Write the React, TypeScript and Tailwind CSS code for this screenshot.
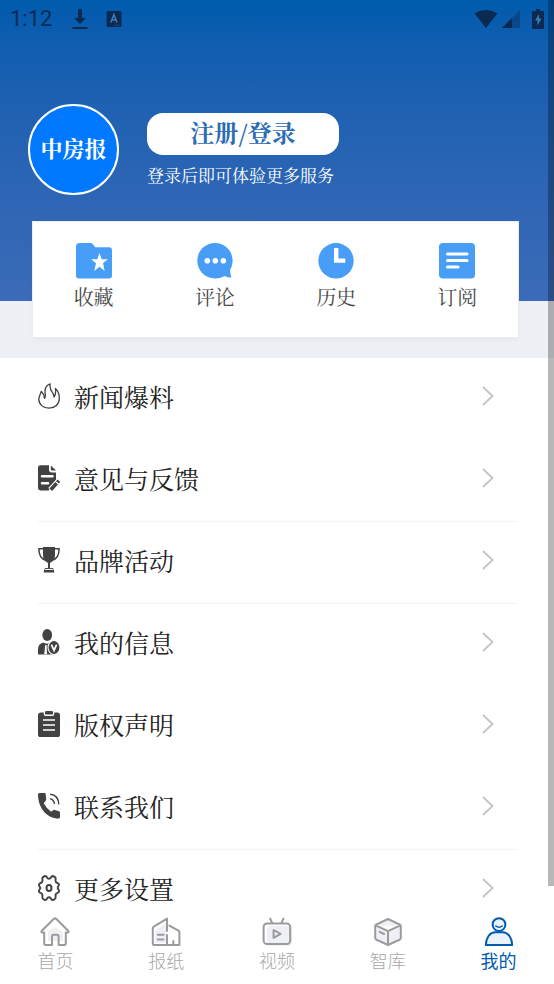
import type { ReactNode } from 'react'

const INK = '#424242'
const BLUE = '#489df7'
const GREY = '#9b9b9b'

const shortcuts: { label: string; icon: ReactNode }[] = [
  {
    label: '收藏',
    icon: (
      <>
        <path d="M3.5 0H14.5Q16 0 17 1.2L19.2 4.2H33Q36 4.2 36 7.2V32.5Q36 35.5 33 35.5H3Q0 35.5 0 32.5V3.5Q0 0 3.5 0Z" fill={BLUE} />
        <path d="M23.5 10L25.7 16.3H31.8L27 20.3L28.7 28L23.5 23.8L18.3 28L20 20.3L15.2 16.3H21.3Z" fill="#fff" />
      </>
    ),
  },
  {
    label: '评论',
    icon: (
      <>
        <path d="M18 0C28 0 35.6 8 35.6 17.5C35.6 21 34.8 24 33 27Q33.2 31 34.5 34.5Q31 34.6 27.5 33Q23.5 35.5 18 35.5C8 35.5 .3 27.5 .3 17.8C.3 8 8 0 18 0Z" fill={BLUE} />
        <circle cx="10.3" cy="17.8" r="2.8" fill="#fff" />
        <circle cx="18.3" cy="17.8" r="2.8" fill="#fff" />
        <circle cx="26.3" cy="17.8" r="2.8" fill="#fff" />
      </>
    ),
  },
  {
    label: '历史',
    icon: (
      <>
        <circle cx="18" cy="17.8" r="17.7" fill={BLUE} />
        <path d="M16 5H20.4V15.4H27.3V19.8H16Z" fill="#fff" />
      </>
    ),
  },
  {
    label: '订阅',
    icon: (
      <>
        <rect width="36" height="35.5" rx="4" fill={BLUE} />
        <path d="M8.5 11H28M8.5 17.5H28M8.5 24H19" stroke="#fff" strokeWidth="3.2" strokeLinecap="round" />
      </>
    ),
  },
]

const menu: { label: string; divider?: boolean; icon: ReactNode }[] = [
  {
    label: '新闻爆料',
    icon: (
      <path
        d="M3.2 8.3C5.2 10.2 6.2 12 6.6 15.3C8 13.8 7.2 11.4 7 9C6.9 5.2 8.8 2 12.2 .9C11.4 5.2 12.6 7.3 14.4 9.4C15.5 10.8 15.9 12.4 16 14C17.6 12.2 18 9.4 17.4 5.4C20.3 8.2 21.4 12 21.3 15.6C21.2 21.4 17 25.2 11 25.2C5 25.2 .8 21.4 .8 16C.8 13 2.6 11.6 3.2 8.3Z"
        fill="none"
        stroke={INK}
        strokeWidth="1.3"
        strokeLinejoin="round"
      />
    ),
  },
  {
    label: '意见与反馈',
    divider: true,
    icon: (
      <>
        <path d="M2.5 .3H11V4.5Q11 7.5 14 7.5H18V15.2L10.6 25.4H2.5Q0 25.4 0 23V3Q0 .3 2.5 .3Z" fill={INK} />
        <path d="M12.8 .5L18 5.6H14Q12.8 5.6 12.8 4.5Z" fill={INK} />
        <path d="M4 11.2H14.5M4 18.2H10" stroke="#fff" strokeWidth="2.5" strokeLinecap="round" />
        <path d="M12.4 25L20.6 16.4" stroke="#fff" strokeWidth="6" />
        <path d="M12.8 24.8L18.6 18.2M19.4 17.4L20.8 15.8" stroke={INK} strokeWidth="3.6" />
      </>
    ),
  },
  {
    label: '品牌活动',
    divider: true,
    icon: (
      <>
        <path d="M5 0H17V8Q17 13.6 12 16V21H15Q16 23 16.4 25.6H5.6Q6 23 7 21H10V16Q5 13.6 5 8Z" fill={INK} />
        <path d="M5 1.8H.9Q.8 11.8 8 13.2M17 1.8H21.1Q21.2 11.8 14 13.2" fill="none" stroke={INK} strokeWidth="1.5" />
        <path d="M7 22.4H15" stroke="#fff" strokeWidth="1" />
      </>
    ),
  },
  {
    label: '我的信息',
    icon: (
      <>
        <ellipse cx="9.2" cy="6" rx="4.9" ry="6" fill={INK} />
        <path d="M0 25V20Q.2 15 5.2 13.6Q9 15.8 13 13.6Q15 14 17 17L14 25.4H0Z" fill={INK} />
        <path d="M7.2 16L6.2 25.3H9L8.6 16Z" fill="#fff" />
        <ellipse cx="16" cy="18.5" rx="6" ry="7" fill={INK} stroke="#fff" strokeWidth="1.1" />
        <path d="M13.4 15.6L16 21.4L18.6 15.6" fill="none" stroke="#fff" strokeWidth="1.7" />
      </>
    ),
  },
  {
    label: '版权声明',
    icon: (
      <>
        <path d="M2.4 1.5H5.8V3.2Q5.8 5 7.6 5H14.4Q16.2 5 16.2 3.2V1.5H19.6Q22 1.5 22 4V23.4Q22 26 19.6 26H2.4Q0 26 0 23.4V4Q0 1.5 2.4 1.5Z" fill={INK} />
        <rect x="7" y="0" width="8" height="3.6" rx="1.2" fill={INK} />
        <path d="M5 9H17M5 14H17M5 19H17" stroke="#fff" strokeWidth="1.6" />
      </>
    ),
  },
  {
    label: '联系我们',
    divider: true,
    icon: (
      <>
        <path d="M1.5 0H6.6Q7.6 0 7.7 1.2L8.2 6.2Q8.2 7.2 7.5 8L5.7 10.2Q8.8 16 13.2 18.8L15 17.2Q15.8 16.6 16.8 16.9L21 18.2Q22 18.6 22 19.8V24Q22 25.5 20.6 25.5C9 25.5 .3 15.2 0 1.7Q0 0 1.5 0Z" fill={INK} />
        <path d="M12.2 1.2Q20.4 2 20.8 11.4M12.2 5.8Q16 6.6 16.4 11" fill="none" stroke={INK} strokeWidth="1.4" />
      </>
    ),
  },
  {
    label: '更多设置',
    icon: (
      <>
        <path
          d="M7.4 1Q8.4 1 9 2.4Q9.6 3.8 11 3.8Q12.4 3.8 13 2.4Q13.6 1 14.6 1Q16 1.2 17.4 2.5Q17.9 3.2 17.5 4.6Q17.2 7.4 19.4 8Q20.9 8.4 21 9.6L19.6 13L21.1 15.6Q21 17.4 19.6 17.8Q17.2 18.4 17.6 21.2Q17.9 22.8 17.2 23.6Q16 24.8 14.6 25Q13.6 25 13 23.6Q12.4 22.2 11 22.2Q9.6 22.2 9 23.6Q8.4 25 7.4 25Q6 24.8 4.8 23.6Q4.1 22.8 4.4 21.2Q4.8 18.4 2.4 17.8Q1 17.4 .9 15.6L2.4 13L.9 10.4Q1 8.4 2.6 8Q4.8 7.4 4.5 4.6Q4.1 3.2 4.6 2.5Q6 1.2 7.4 1Z"
          fill="none"
          stroke={INK}
          strokeWidth="1.9"
          strokeLinejoin="round"
        />
        <ellipse cx="11" cy="13" rx="2.5" ry="3" fill="none" stroke={INK} strokeWidth="2" />
      </>
    ),
  },
]

const tabs: { label: string; active?: boolean; icon: ReactNode }[] = [
  {
    label: '首页',
    icon: (
      <>
        <path d="M8 15L15 10L23 15V24H8Z" fill="#efeff6" stroke="none" />
        <path d="M4.2 15.6H2.6Q.6 15.4 1.8 13.8L13.6 2Q15 .8 16.4 2L28.2 13.8Q29.4 15.4 27.4 15.6H25.8V26.2Q25.8 28 24 28H18.6V19.5Q18.6 17.8 17 17.8H13.6Q12 17.8 12 19.5V28H6Q4.2 28 4.2 26.2Z" />
      </>
    ),
  },
  {
    label: '报纸',
    icon: (
      <>
        <path d="M4 14L15 6V26H4Z" fill="#efeff6" stroke="none" />
        <path d="M16 14V1.6L2.8 9.6Q1.8 10.3 1.8 11.5V26.2Q1.8 28 3.4 28H28.4V15.4Q28.4 14.2 27.4 13.6L18.4 8.6M16 18V28M6.8 17.8H12.6M6.8 22.6H12.6M22.4 28V24" />
      </>
    ),
  },
  {
    label: '视频',
    icon: (
      <>
        <rect x="5" y="9" width="25" height="20" rx="4" fill="#efeff6" stroke="none" />
        <rect x="1.6" y="6.4" width="26.6" height="20.6" rx="3.6" />
        <path d="M8.2 1.6L10 5.6M21.4 1.6L19.6 5.6M11.6 13V20.8L18.6 16.9Z" />
      </>
    ),
  },
  {
    label: '智库',
    icon: (
      <path d="M15 2L27 7.6Q27.8 8 27.8 9V21Q27.8 22 27 22.5L15 28L3 22.5Q2.2 22 2.2 21V9Q2.2 8 3 7.6ZM2.8 8.4L15 14.2L27.2 8.4M15 14.2V28M6.6 14.8L11 17" fill="#efeff6" />
    ),
  },
  {
    label: '我的',
    active: true,
    icon: (
      <>
        <circle cx="15" cy="7.6" r="6.4" fill="#eaf3fd" />
        <path d="M11.8 9Q15 11.6 18.2 9" strokeWidth="1.5" />
        <path d="M1.8 28C2 21 5.6 15.2 11.6 15.2H18.4C24.4 15.2 28 21 28.2 28Z" fill="#eaf3fd" />
      </>
    ),
  },
]

function StatusBar() {
  return (
    <div className="flex h-9 items-center pt-0.5 pr-2.5 pl-2.5 text-[#0a2a52]">
      <span className="font-[Roboto,sans-serif] text-[22px] leading-6">1:12</span>
      <svg className="ml-5 h-5 w-4" viewBox="0 0 16 20" fill="currentColor">
        <path d="M6 0H10V9H14L8 15L2 9H6ZM.5 18H15.5V20H.5Z" />
      </svg>
      <svg className="ml-4.5 h-4 w-4" viewBox="0 0 16 16">
        <rect x=".5" width="15" height="16" rx="1.5" fill="currentColor" />
        <path d="M4.8 11.5L7.9 3.6L11 11.5M6 9H9.8" fill="none" stroke="#3f79b5" strokeWidth="1.6" />
        <path d="M8.5 14.2H14" stroke="#1c64aa" strokeWidth="1" strokeDasharray="1 1" />
      </svg>
      <svg className="ml-auto h-[18px] w-6" viewBox="0 0 24 18" fill="currentColor">
        <path d="M.5 3.2Q12-3 23.5 3.2L12 18Z" />
      </svg>
      <svg className="ml-1 h-[18px] w-[18px]" viewBox="0 0 18 18" fill="currentColor">
        <path d="M18 0V18H0Z" opacity=".4" />
        <path d="M10 8V18H0Z" />
      </svg>
      <svg className="ml-3 h-5 w-3" viewBox="0 0 12 20">
        <path d="M4 0H8V2H11Q12 2 12 3V19Q12 20 11 20H1Q0 20 0 19V3Q0 2 1 2H4Z" fill="currentColor" />
        <path d="M7 5L3 11.5H5.5V16.5L9.5 9.5H7Z" fill="#3f79b5" />
      </svg>
    </div>
  )
}

export default function App() {
  return (
    <div className="relative flex h-screen flex-col overflow-hidden bg-white font-['Noto_Serif_CJK_SC','Noto_Sans_CJK_SC',serif]">
      <main className="min-h-0 flex-1 overflow-y-auto [scrollbar-width:none]">
        <div className="bg-[#eff0f5] pb-5">
          {/* Blue header */}
          <header className="h-[301px] bg-linear-to-b from-[#005bae] to-[#3c6bb8]">
            <StatusBar />
            <div className="flex items-center pt-[68px] pl-7">
              <div className="flex h-[91px] w-[91px] items-center justify-center rounded-full border-2 border-white bg-[#0078ff] pb-1 text-[22px] font-bold text-white">
                中房报
              </div>
              <div className="ml-7">
                <button type="button" className="h-[42px] w-48 rounded-2xl bg-white pb-1 text-2xl font-bold text-[#2b6cb5]">
                  注册/登录
                </button>
                <p className="mt-2 text-[17px] leading-6 text-white">登录后即可体验更多服务</p>
              </div>
            </div>
          </header>

          {/* Shortcuts */}
          <section className="relative mr-[35px] ml-8 -mt-20 grid h-[117px] grid-cols-4 border border-[#e8ecf5] bg-white shadow-md shadow-black/3">
            {shortcuts.map((item) => (
              <button key={item.label} type="button" className="flex flex-col items-center pt-[21px] text-[20px] leading-7 text-[#484848]">
                <svg className="h-9 w-9" viewBox="0 0 36 36" fill="none">
                  {item.icon}
                </svg>
                <span className="mt-1">{item.label}</span>
              </button>
            ))}
          </section>
        </div>

        {/* Menu list */}
        <ul className="mr-9 ml-[38px]">
          {menu.map((item) => (
            <li key={item.label} className={item.divider ? 'border-b border-[#f4f4f4]' : 'border-b border-transparent'}>
              <a href="#" className="flex h-[81px] items-center pb-1.5 text-[25px] leading-9 text-[#222]">
                <svg className="h-[26px] w-[22px]" viewBox="0 0 22 26">
                  {item.icon}
                </svg>
                <span className="ml-3.5">{item.label}</span>
                <svg className="mr-6 ml-auto h-5 w-3" viewBox="0 0 12 20" fill="none" stroke="#c4c4c4" strokeWidth="1.8">
                  <path d="M1 1L10.5 10L1 19" />
                </svg>
              </a>
            </li>
          ))}
        </ul>
      </main>

      {/* Bottom tabs */}
      <nav className="grid h-[75px] shrink-0 grid-cols-5 bg-white font-['Noto_Sans_CJK_SC',sans-serif] text-lg leading-6 font-light">
        {tabs.map((tab) => (
          <a
            key={tab.label}
            href="#"
            className={tab.active ? 'flex flex-col items-center pt-2 font-normal text-[#005bae]' : 'flex flex-col items-center pt-2 text-[#a8a8a8]'}
          >
            <svg
              className="h-[30px] w-[30px]"
              viewBox="0 0 30 30"
              fill="none"
              stroke={tab.active ? '#005bae' : GREY}
              strokeWidth="2"
              strokeLinejoin="round"
              strokeLinecap="round"
            >
              {tab.icon}
            </svg>
            <span className="mt-px">{tab.label}</span>
          </a>
        ))}
      </nav>

      {/* Scroll indicator over the page */}
      <div className="pointer-events-none absolute top-0 right-0 h-[90%] w-1.5 bg-black/28" />
    </div>
  )
}
